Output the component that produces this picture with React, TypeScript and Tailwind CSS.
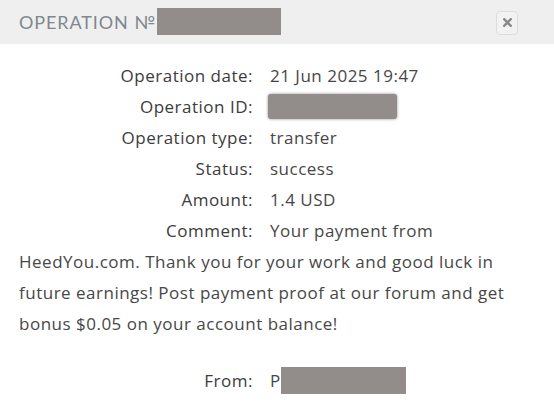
import React from "react";

const Label = ({ children }: { children: React.ReactNode }) => (
  <span className="inline-block w-[234px] text-right mr-[17px] text-[#3c3c3c]">{children}</span>
);

export default function App() {
  return (
    <div className="w-[554px] h-[412px] bg-white overflow-hidden">
      <div className="h-[44px] bg-[#efefef] flex items-center pl-[19px] pr-[36px]">
        <span className="text-[18px] tracking-[0.9px] text-[#80878d] leading-none" style={{ fontFamily: "Lato, sans-serif" }}>
          OPERATION №
        </span>
        <span className="ml-[1px] w-[124px] h-[27px] bg-[#928c8b] -mt-[2px]" />
        <div className="ml-auto w-[22px] h-[24px] rounded-[4px] border border-[#dcdcdc] bg-[#f2f2f2] flex items-center justify-center mt-[1px]">
          <svg width="9" height="9" viewBox="0 0 9 9">
            <path d="M1.2 1.2 L7.8 7.8 M7.8 1.2 L1.2 7.8" stroke="#8a8a8a" strokeWidth="2.4" strokeLinecap="square" />
          </svg>
        </div>
      </div>
      <div className="pt-[16px] px-[19px] text-[17px] tracking-[0.5px] leading-[31px] text-[#474747]" style={{ fontFamily: "'Open Sans', sans-serif" }}>
        <div><Label>Operation date:</Label>21 Jun 2025 19:47</div>
        <div className="flex items-center">
          <Label>Operation ID:</Label>
          <span className="inline-block -ml-[2px] w-[129px] h-[25px] rounded-[3px] bg-[#928c8b] shadow-[0_0_3px_#928c8b]" />
        </div>
        <div><Label>Operation type:</Label>transfer</div>
        <div><Label>Status:</Label>success</div>
        <div><Label>Amount:</Label>1.4 USD</div>
        <div className="pr-[10px]">
          <Label>Comment:</Label>Your payment from HeedYou.com. Thank you for your work and good luck in future earnings! Post payment proof at our forum and get bonus $0.05 on your account balance!
        </div>
        <div className="mt-[26px] flex items-center">
          <Label>From:</Label>
          <span>P</span>
          <span className="inline-block w-[125px] h-[27px] bg-[#928c8b]" />
        </div>
      </div>
    </div>
  );
}
